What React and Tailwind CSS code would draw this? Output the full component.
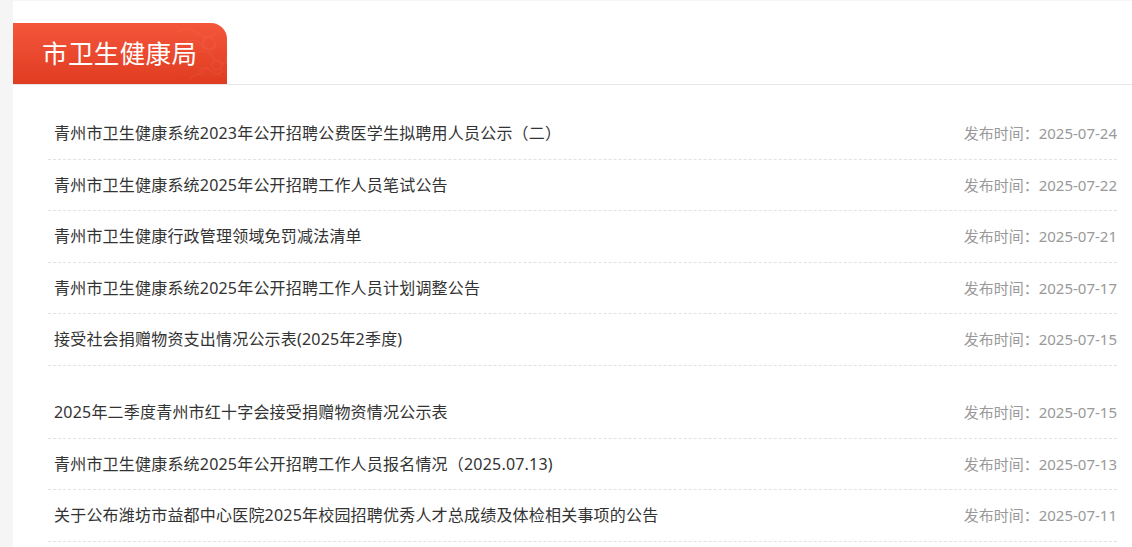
import React from 'react';

const GROUP_A = [
  { t: '青州市卫生健康系统2023年公开招聘公费医学生拟聘用人员公示（二）', d: '2025-07-24' },
  { t: '青州市卫生健康系统2025年公开招聘工作人员笔试公告', d: '2025-07-22' },
  { t: '青州市卫生健康行政管理领域免罚减法清单', d: '2025-07-21' },
  { t: '青州市卫生健康系统2025年公开招聘工作人员计划调整公告', d: '2025-07-17' },
  { t: '接受社会捐赠物资支出情况公示表(2025年2季度)', d: '2025-07-15' },
];

const GROUP_B = [
  { t: '2025年二季度青州市红十字会接受捐赠物资情况公示表', d: '2025-07-15' },
  { t: '青州市卫生健康系统2025年公开招聘工作人员报名情况（2025.07.13)', d: '2025-07-13' },
  { t: '关于公布潍坊市益都中心医院2025年校园招聘优秀人才总成绩及体检相关事项的公告', d: '2025-07-11' },
];

function Row({ item }) {
  return (
    <li className="h-[51.5px] flex items-center justify-between pl-[6px] border-b border-dashed border-[#e2e2e2]">
      <a className="text-[16px] tracking-[0.2px] text-[#333] truncate">{item.t}</a>
      <span className="text-[15px] text-[#999] shrink-0 ml-6">发布时间：{item.d}</span>
    </li>
  );
}

export default function App() {
  return (
    <div
      className="min-h-screen bg-[#f5f5f5] pl-[13px] pt-px overflow-hidden"
      style={{ fontFamily: '"Noto Sans", "Noto Sans CJK SC", sans-serif' }}
    >
      <div className="bg-white min-h-[546px]">
        {/* header */}
        <div className="pt-[22px] border-b border-[#e6e6e6]">
          <div className="relative w-[214px] h-[61px] rounded-tr-[16px] overflow-hidden bg-gradient-to-b from-[#f4563a] to-[#e03c22] flex items-center pl-[29px]">
            <svg className="absolute right-0 top-0 opacity-[0.06]" width="90" height="61" viewBox="0 0 90 61">
              <g fill="none" stroke="#ffe0d4" strokeWidth="1.2">
                <path d="M40 10 q10 -8 20 0 t20 0" />
                <path d="M48 22 q8 -10 16 0 q8 10 16 0" />
                <path d="M56 34 c6 -8 14 -8 20 0 s14 8 14 0" />
                <path d="M62 48 q6 -6 12 0 t12 0" />
                <circle cx="72" cy="20" r="6" />
                <circle cx="80" cy="42" r="5" />
                <path d="M52 56 c6 -6 10 -2 14 -8" />
              </g>
            </svg>
            <span className="relative text-white text-[25.5px] leading-none tracking-[0.4px]">市卫生健康局</span>
          </div>
        </div>

        {/* lists */}
        <div className="ml-[35px] mr-[15px] pt-[23px]">
          <ul>
            {GROUP_A.map((it, i) => (
              <Row key={i} item={it} />
            ))}
          </ul>
          <ul className="mt-[21.5px]">
            {GROUP_B.map((it, i) => (
              <Row key={i} item={it} />
            ))}
          </ul>
        </div>
      </div>
    </div>
  );
}
